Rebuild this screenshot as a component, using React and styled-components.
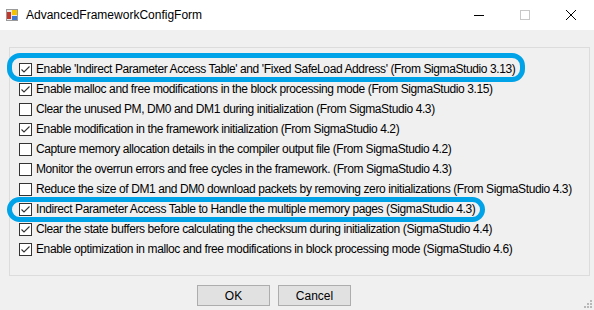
import React from "react";
import styled, { createGlobalStyle } from "styled-components";

const GlobalStyle = createGlobalStyle`
  html, body {
    margin: 0;
    padding: 0;
    background: #f0f0f0;
  }
  body {
    font-family: "Liberation Sans", Arial, sans-serif;
    font-size: 12px;
    color: #000;
  }
`;

const Window = styled.div`
  width: 594px;
  height: 310px;
  display: flex;
  flex-direction: column;
  background: #f0f0f0;
  overflow: hidden;
  position: relative;
`;

const TitleBar = styled.div`
  height: 30px;
  background: #fff;
  display: flex;
  align-items: center;
  padding-left: 6px;
  flex-shrink: 0;
`;

const Title = styled.span`
  margin-left: 8px;
  font-size: 12px;
  color: #000;
  flex: 1;
`;

const Controls = styled.div`
  display: flex;
  height: 100%;
`;

const ControlButton = styled.div`
  width: 46px;
  height: 100%;
  display: flex;
  align-items: center;
  justify-content: center;
`;

const GroupBox = styled.div`
  margin: 17px 4px 0 9px;
  height: 229px;
  box-sizing: border-box;
  border: 1px solid #dcdcdc;
  padding: 11px 0 0 9px;
  display: flex;
  flex-direction: column;
`;

const Row = styled.div`
  height: 20px;
  display: flex;
  align-items: center;
`;

const Label = styled.label`
  height: 100%;
  display: inline-flex;
  align-items: center;
  gap: 4px;
  position: relative;
  white-space: nowrap;
  letter-spacing: -0.4px;

  &::before {
    content: "";
    display: ${(p) => (p.$ring ? "block" : "none")};
    position: absolute;
    left: -12px;
    right: -10px;
    top: ${(p) => (p.$ring ? -p.$ring.top : 0)}px;
    bottom: ${(p) => (p.$ring ? -p.$ring.bottom : 0)}px;
    border: 5px solid #00a2e8;
    border-radius: 13px;
    pointer-events: none;
  }
`;

const Footer = styled.div`
  display: flex;
  gap: 8px;
  padding: 9px 0 0 197px;
`;

const Button = styled.button`
  width: 73px;
  height: 21px;
  box-sizing: border-box;
  background: #e1e1e1;
  border: 1px solid #adadad;
  font-family: "Liberation Sans", Arial, sans-serif;
  font-size: 12px;
  color: #000;
  padding: 0;
`;

const Grip = styled.svg`
  position: absolute;
  right: 2px;
  bottom: 2px;
`;

const AppIcon = () => (
  <svg width="12" height="12" viewBox="0 0 12 12">
    <rect x="0.5" y="0.5" width="11" height="11" fill="#e8e8e8" stroke="#9a9a9a" />
    <rect x="1" y="3" width="4" height="7" fill="#c0392b" />
    <rect x="6" y="1" width="5" height="5" fill="#f2c300" />
    <rect x="6" y="7" width="5" height="4" fill="#3a78d4" />
  </svg>
);

const CheckBox = ({ checked }) => (
  <svg width="13" height="13" viewBox="0 0 13 13">
    <rect x="0.5" y="0.5" width="12" height="12" fill="#fff" stroke="#333" />
    {checked && (
      <path d="M2.5 6.5 L5 9 L10.5 3.5" fill="none" stroke="#333" strokeWidth="1.1" />
    )}
  </svg>
);

const options = [
  { text: "Enable 'Indirect Parameter Access Table' and 'Fixed SafeLoad Address' (From SigmaStudio 3.13)", checked: true, ring: { top: 6, bottom: 3 } },
  { text: "Enable malloc and free modifications in the block processing mode (From SigmaStudio 3.15)", checked: true },
  { text: "Clear the unused PM, DM0 and DM1 during initialization (From SigmaStudio 4.3)", checked: false },
  { text: "Enable modification in the framework initialization (From SigmaStudio 4.2)", checked: true },
  { text: "Capture memory allocation details in the compiler output file (From SigmaStudio 4.2)", checked: false },
  { text: "Monitor the overrun errors and free cycles in the framework. (From SigmaStudio 4.3)", checked: false },
  { text: "Reduce the size of DM1 and DM0 download packets by removing zero initializations (From SigmaStudio 4.3)", checked: false },
  { text: "Indirect Parameter Access Table to Handle the multiple memory pages (SigmaStudio 4.3)", checked: true, ring: { top: 2, bottom: 3 } },
  { text: "Clear the state buffers before calculating the checksum during initialization (SigmaStudio 4.4)", checked: true },
  { text: "Enable optimization in malloc and free modifications in block processing mode (SigmaStudio 4.6)", checked: true },
];

export default function App() {
  return (
    <>
      <GlobalStyle />
      <Window>
        <TitleBar>
          <AppIcon />
          <Title>AdvancedFrameworkConfigForm</Title>
          <Controls>
            <ControlButton>
              <svg width="10" height="10" viewBox="0 0 10 10">
                <line x1="0" y1="5.5" x2="10" y2="5.5" stroke="#000" />
              </svg>
            </ControlButton>
            <ControlButton>
              <svg width="10" height="10" viewBox="0 0 10 10">
                <rect x="0.5" y="0.5" width="9" height="9" fill="none" stroke="#c8c8c8" />
              </svg>
            </ControlButton>
            <ControlButton>
              <svg width="10" height="10" viewBox="0 0 10 10">
                <path d="M0 0 L10 10 M10 0 L0 10" stroke="#000" />
              </svg>
            </ControlButton>
          </Controls>
        </TitleBar>

        <GroupBox>
          {options.map((o, i) => (
            <Row key={i}>
              <Label $ring={o.ring}>
                <CheckBox checked={o.checked} />
                {o.text}
              </Label>
            </Row>
          ))}
        </GroupBox>

        <Footer>
          <Button>OK</Button>
          <Button>Cancel</Button>
        </Footer>

        <Grip width="8" height="8" viewBox="0 0 8 8">
          {[[6, 0], [6, 3], [3, 3], [6, 6], [3, 6], [0, 6]].map(([x, y], i) => (
            <rect key={i} x={x} y={y} width="2" height="2" fill="#b8b8b8" />
          ))}
        </Grip>
      </Window>
    </>
  );
}
